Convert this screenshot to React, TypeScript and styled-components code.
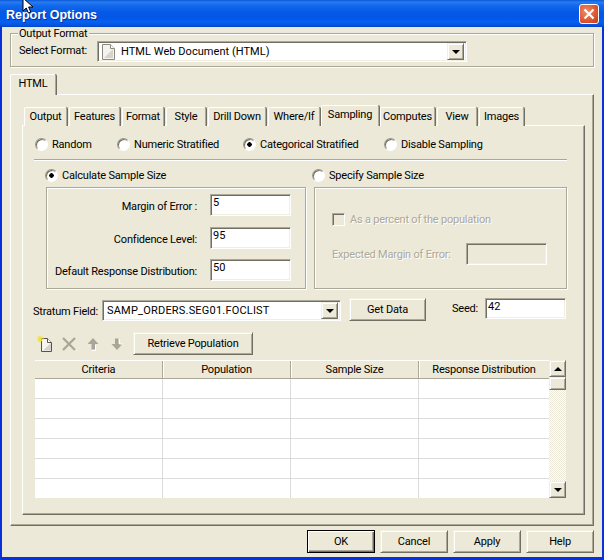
import styled, { createGlobalStyle } from "styled-components";

const GlobalStyle = createGlobalStyle`
  html, body { margin: 0; padding: 0; background: #0a4fd8; }
  * { box-sizing: border-box; }
  body { font-family: Roboto, "Liberation Sans", Arial, sans-serif; font-size: 11px; letter-spacing: -0.2px; color: #000; }
`;

const Window = styled.div`
  position: relative;
  width: 604px;
  height: 560px;
  display: flex;
  flex-direction: column;
  background: #0831d9;
  overflow: hidden;
`;

const TitleBar = styled.div`
  height: 27px;
  flex: none;
  display: flex;
  align-items: center;
  justify-content: space-between;
  padding: 2px 5px 0 6px;
  background: linear-gradient(
    180deg,
    #0a58d8 0%,
    #2a7cf0 8%,
    #1269ec 20%,
    #0659e6 45%,
    #0357e8 65%,
    #0560f0 82%,
    #0452dc 94%,
    #0344c0 100%
  );
`;

const Title = styled.span`
  font-family: "Liberation Sans", Arial, sans-serif;
  font-weight: bold;
  font-size: 12.5px;
  letter-spacing: 0;
  color: #fff;
  text-shadow: 1px 1px 0 #0a2f9a;
`;

const CloseButton = styled.div`
  width: 20px;
  height: 20px;
  margin-top: -2px;
  display: flex;
  align-items: center;
  justify-content: center;
  border: 1px solid #fff;
  border-radius: 3px;
  background: radial-gradient(circle at 35% 35%, #ee8a68 0%, #df5b35 55%, #c23a14 100%);
`;

const Cursor = styled.svg`
  position: absolute;
  left: 22px;
  top: -3px;
`;

const Body = styled.div`
  flex: 1;
  margin: 0 2px 3px;
  padding: 6px 8px 0;
  background: #ece9d8;
  display: flex;
  flex-direction: column;
`;

const GroupBox = styled.div`
  position: relative;
  height: 34px;
  padding: 7px 0 0 8px;
  width: 584px;
  border: 1px solid #aca899;
  box-shadow: inset 1px 1px 0 #fff, 1px 1px 0 #fff;
  display: flex;
  align-items: flex-start;
`;

const GroupCaption = styled.span`
  position: absolute;
  left: 7px;
  top: -7px;
  padding: 0 2px 0 1px;
  background: #ece9d8;
  line-height: 14px;
`;

const SelectLabel = styled.span`
  width: 78px;
  line-height: 20px;
  white-space: nowrap;
`;

const Sunken = styled.div`
  background: #fff;
  border: 1px solid;
  border-color: #aca899 #fff #fff #aca899;
  box-shadow: inset 1px 1px 0 #716f64, inset -1px -1px 0 #f1efe2;
`;

const Combo = styled(Sunken)<{ $width: number; $height: number }>`
  width: ${(p) => p.$width}px;
  height: ${(p) => p.$height}px;
  display: flex;
  align-items: center;
  padding: 2px;
  white-space: nowrap;
`;

const ComboText = styled.span`
  flex: 1;
  padding-left: 2px;
  letter-spacing: 0.2px;
`;

const FormatText = styled(ComboText)`
  padding-left: 6px;
  letter-spacing: 0.05px;
`;

const DocIcon = styled.svg`
  margin-left: 2px;
  flex: none;
`;

const ArrowButton = styled.div<{ $height?: number }>`
  width: 17px;
  height: ${(p) => p.$height ?? 17}px;
  flex: none;
  display: flex;
  align-items: center;
  justify-content: center;
  background: #ece9d8;
  border: 1px solid;
  border-color: #f1efe2 #716f64 #716f64 #f1efe2;
  box-shadow: inset 1px 1px 0 #fff, inset -1px -1px 0 #aca899;
`;

const TriangleDown = styled.span`
  width: 0;
  height: 0;
  border-left: 4px solid transparent;
  border-right: 4px solid transparent;
  border-top: 4px solid #000;
`;

const TriangleUp = styled.span`
  width: 0;
  height: 0;
  border-left: 4px solid transparent;
  border-right: 4px solid transparent;
  border-bottom: 4px solid #000;
`;

const TabStrip = styled.div<{ $pad: number }>`
  display: flex;
  align-items: flex-end;
  gap: 2px;
  padding-left: ${(p) => p.$pad}px;
  margin-bottom: -1px;
  position: relative;
  z-index: 1;
`;

const Tab = styled.div<{ $width: number; $active?: boolean }>`
  width: ${(p) => p.$width}px;
  height: ${(p) => (p.$active ? 21 : 19)}px;
  margin: 0 ${(p) => (p.$active ? -1 : 0)}px;
  display: flex;
  align-items: center;
  justify-content: center;
  padding-bottom: ${(p) => (p.$active ? 3 : 1)}px;
  background: #ece9d8;
  border-top: 1px solid #fff;
  border-left: 1px solid #fff;
  border-right: 1px solid #aca899;
  border-radius: 2px 2px 0 0;
  box-shadow: 1px 0 0 #716f64;
  white-space: nowrap;
`;

const OuterTab = styled(Tab)`
  margin: 7px 0 0;
`;

const OuterPanel = styled.div`
  width: 584px;
  height: 432px;
  padding: 10px 8px 0 11px;
  border: 1px solid;
  border-color: #fff #716f64 #716f64 #fff;
  box-shadow: inset -1px -1px 0 #aca899;
`;

const InnerPanel = styled.div`
  width: 563px;
  height: 390px;
  padding: 11px 17px 0 11px;
  border: 1px solid;
  border-color: #fff #716f64 #716f64 #fff;
  box-shadow: inset -1px -1px 0 #aca899;
`;

const ModeRow = styled.div`
  display: grid;
  grid-template-columns: 82px 126px 141px auto;
  padding-left: 1px;
  height: 14px;
`;

const RadioItem = styled.div`
  display: flex;
  align-items: center;
  gap: 4px;
  height: 14px;
  white-space: nowrap;
  line-height: 13px;
`;

const CalcRadioItem = styled(RadioItem)`
  margin-left: -1px;
`;

const SpecifyRadioItem = styled(RadioItem)`
  margin-left: -2px;
`;

const RadioDot = styled.span<{ $checked?: boolean }>`
  width: 13px;
  height: 13px;
  flex: none;
  border-radius: 50%;
  background: ${(p) =>
    p.$checked
      ? "radial-gradient(circle, #000 0 2px, #fff 2.5px)"
      : "#fff"};
  border: 1px solid;
  border-color: #9a9789 #fff #fff #9a9789;
  box-shadow: inset 1px 1px 0 #716f64;
`;

const Separator = styled.div`
  height: 2px;
  margin-top: 8px;
  border-top: 1px solid #aca899;
  border-bottom: 1px solid #fff;
`;

const Columns = styled.div`
  display: grid;
  grid-template-columns: 260px 253px;
  gap: 8px;
  margin: 7px 0 0 12px;
`;

const Column = styled.div`
  display: flex;
  flex-direction: column;
  gap: 5px;
`;

const EtchedBox = styled.div`
  height: 102px;
  border: 1px solid #aca899;
  box-shadow: inset 1px 1px 0 #fff, 1px 1px 0 #fff;
`;

const SizeBox = styled(EtchedBox)`
  padding-top: 6px;
  display: flex;
  flex-direction: column;
`;

const SizeRow = styled.div`
  display: flex;
  align-items: center;
  gap: 13px;
  & + & {
    margin-top: 10px;
  }
  &:nth-child(2) {
    margin-top: 11px;
  }
`;

const SizeLabel = styled.span`
  width: 150px;
  padding-top: 3px;
  text-align: right;
  white-space: nowrap;
`;

const ValueField = styled(Sunken)<{ $height?: number }>`
  width: 81px;
  height: ${(p) => p.$height ?? 22}px;
  padding: 0 2px;
  line-height: 15px;
  letter-spacing: 0;
`;

const DisabledField = styled(ValueField)`
  background: #ece9d8;
`;

const SpecifyBox = styled(EtchedBox)`
  padding: 25px 0 0 17px;
  color: #aca899;
`;

const CheckRow = styled.div`
  display: flex;
  align-items: center;
  gap: 5px;
  height: 13px;
  text-shadow: 1px 1px 0 #fff;
`;

const CheckSquare = styled.span`
  width: 13px;
  height: 13px;
  border: 1px solid;
  border-color: #aca899 #fff #fff #aca899;
  box-shadow: inset 1px 1px 0 #716f64;
`;

const ExpectedRow = styled.div`
  display: flex;
  align-items: center;
  margin-top: 17px;
  text-shadow: 1px 1px 0 #fff;
`;

const ExpectedLabel = styled.span`
  width: 134px;
  white-space: nowrap;
`;

const StratumRow = styled.div`
  display: flex;
  align-items: flex-start;
  margin: 9px 0 0 -1px;
  height: 23px;
`;

const StratumLabel = styled.span`
  width: 69px;
  margin-top: 6px;
  line-height: 15px;
  white-space: nowrap;
`;

const StratumCombo = styled(Combo)`
  margin: 2px 8px 0 0;
`;

const SeedLabel = styled.span`
  width: 33px;
  margin-left: 26px;
  line-height: 21px;
  white-space: nowrap;
`;

const PushButton = styled.div<{ $width: number }>`
  width: ${(p) => p.$width}px;
  height: 23px;
  display: flex;
  align-items: center;
  justify-content: center;
  flex: none;
  padding-bottom: 1px;
  background: #ece9d8;
  border: 1px solid;
  border-color: #f1efe2 #716f64 #716f64 #f1efe2;
  box-shadow: inset 1px 1px 0 #fff, inset -1px -1px 0 #aca899;
  white-space: nowrap;
`;

const DefaultButton = styled(PushButton)`
  border-color: #000;
  box-shadow: inset 1px 1px 0 #fff, inset -1px -1px 0 #716f64, inset -2px -2px 0 #aca899;
`;

const Toolbar = styled.div`
  display: flex;
  align-items: center;
  gap: 8px;
  margin: 11px 0 0 3px;
  height: 23px;
`;

const TableRow = styled.div`
  display: flex;
  margin: 5px 0 0 1px;
  height: 138px;
`;

const Grid = styled.div`
  width: 514px;
  background: #fff;
  display: flex;
  flex-direction: column;
`;

const HeaderRow = styled.div`
  height: 19px;
  flex: none;
  display: grid;
  grid-template-columns: 128px 128px 128px 130px;
  background: #ece9d8;
  border-top: 1px solid #fff;
  border-bottom: 1px solid #aca899;
`;

const HeaderCell = styled.div`
  display: flex;
  align-items: center;
  justify-content: center;
  white-space: nowrap;
  border-right: 1px solid #aca899;
  box-shadow: 1px 0 0 #fff;
  &:last-child {
    border-right: 0;
    box-shadow: none;
  }
`;

const DataRow = styled.div`
  flex: 1;
  display: grid;
  grid-template-columns: 128px 128px 128px 130px;
  border-bottom: 1px solid #dcdcdc;
  &:last-child {
    border-bottom: 0;
  }
`;

const DataCell = styled.div`
  border-right: 1px solid #dcdcdc;
  &:last-child {
    border-right: 0;
  }
`;

const ScrollBar = styled.div`
  width: 17px;
  display: flex;
  flex-direction: column;
  background: repeating-conic-gradient(#ece9d8 0 25%, #fff 0 50%) 0 0 / 2px 2px;
`;

const ScrollTrack = styled.div`
  flex: 1;
`;

const Footer = styled.div`
  display: flex;
  justify-content: flex-end;
  gap: 5px;
  margin-top: 4px;
`;

const modes = [
  { label: "Random" },
  { label: "Numeric Stratified" },
  { label: "Categorical Stratified", checked: true },
  { label: "Disable Sampling" },
];

const tabs = [
  { label: "Output", width: 43 },
  { label: "Features", width: 51 },
  { label: "Format", width: 42 },
  { label: "Style", width: 40 },
  { label: "Drill Down", width: 58 },
  { label: "Where/If", width: 52 },
  { label: "Sampling", width: 58, active: true },
  { label: "Computes", width: 55 },
  { label: "View", width: 40 },
  { label: "Images", width: 45 },
];

const sizeFields = [
  { label: "Margin of Error :", value: "5" },
  { label: "Confidence Level:", value: "95" },
  { label: "Default Response Distribution:", value: "50" },
];

const columns = ["Criteria", "Population", "Sample Size", "Response Distribution"];
const rows = [0, 1, 2, 3, 4, 5];

function PageIcon() {
  return (
    <DocIcon width="13" height="16" viewBox="0 0 13 16">
      <path d="M.5.5h8l4 4v11H.5z" fill="#f4f3ee" stroke="#8a8a80" />
      <path d="M8.5.5v4h4" fill="#fff" stroke="#8a8a80" />
      <path d="M2 14L11 5v9z" fill="#d6d4cc" />
    </DocIcon>
  );
}

function NewIcon() {
  return (
    <svg width="16" height="18" viewBox="0 0 16 18">
      <path d="M4.5 3.5h6l4 4v9h-10z" fill="#f6f5ef" stroke="#55554d" />
      <path d="M10.5 3.5v4h4" fill="#fff" stroke="#55554d" />
      <path d="M6 15.5L14 8v7.5z" fill="#d4d2ca" />
      <path d="M3 .5v7M0 4h7M.8 1.5l4.6 5M5.4 1.5l-4.6 5" stroke="#f2e22a" strokeWidth="1.1" />
    </svg>
  );
}

function DeleteIcon() {
  return (
    <svg width="16" height="18" viewBox="0 0 16 18">
      <path d="M2 3l12 12M14 3L2 15" stroke="#a8a698" strokeWidth="2.2" />
      <path d="M15 15.5h1" stroke="#fff" />
    </svg>
  );
}

function UpIcon() {
  return (
    <svg width="16" height="18" viewBox="0 0 16 18">
      <path d="M8 3l5.5 6H10v5.5H6.5V9H2.5z" fill="#a8a698" />
      <path d="M10.5 10v5.5H7" stroke="#fff" fill="none" />
    </svg>
  );
}

function DownIcon() {
  return (
    <svg width="16" height="18" viewBox="0 0 16 18">
      <path d="M8 15L2.5 9H6V3.5h3.5V9h4z" fill="#a8a698" />
      <path d="M10.5 4v5H14" stroke="#fff" fill="none" />
    </svg>
  );
}

export default function App() {
  return (
    <>
      <GlobalStyle />
      <Window>
        <TitleBar>
          <Title>Report Options</Title>
          <CloseButton>
            <svg width="12" height="12" viewBox="0 0 12 12">
              <path d="M1.5 1.5l9 9M10.5 1.5l-9 9" stroke="#fff" strokeWidth="2.2" />
            </svg>
          </CloseButton>
        </TitleBar>
        <Cursor width="14" height="18" viewBox="0 0 14 18">
          <path d="M1 1v13l3.2-3 2.2 5 2.4-1-2.2-5H11z" fill="#fff" stroke="#000" />
        </Cursor>
        <Body>
          <GroupBox>
            <GroupCaption>Output Format</GroupCaption>
            <SelectLabel>Select Format:</SelectLabel>
            <Combo $width={370} $height={21}>
              <PageIcon />
              <FormatText>HTML Web Document (HTML)</FormatText>
              <ArrowButton>
                <TriangleDown />
              </ArrowButton>
            </Combo>
          </GroupBox>
          <TabStrip $pad={0}>
            <OuterTab $width={46} $active>
              HTML
            </OuterTab>
          </TabStrip>
          <OuterPanel>
            <TabStrip $pad={2}>
              {tabs.map((t) => (
                <Tab key={t.label} $width={t.width} $active={t.active}>
                  {t.label}
                </Tab>
              ))}
            </TabStrip>
            <InnerPanel>
              <ModeRow>
                {modes.map((m) => (
                  <RadioItem key={m.label}>
                    <RadioDot $checked={m.checked} />
                    {m.label}
                  </RadioItem>
                ))}
              </ModeRow>
              <Separator />
              <Columns>
                <Column>
                  <CalcRadioItem>
                    <RadioDot $checked />
                    Calculate Sample Size
                  </CalcRadioItem>
                  <SizeBox>
                    {sizeFields.map((f) => (
                      <SizeRow key={f.label}>
                        <SizeLabel>{f.label}</SizeLabel>
                        <ValueField>{f.value}</ValueField>
                      </SizeRow>
                    ))}
                  </SizeBox>
                </Column>
                <Column>
                  <SpecifyRadioItem>
                    <RadioDot />
                    Specify Sample Size
                  </SpecifyRadioItem>
                  <SpecifyBox>
                    <CheckRow>
                      <CheckSquare />
                      As a percent of the population
                    </CheckRow>
                    <ExpectedRow>
                      <ExpectedLabel>Expected Margin of Error:</ExpectedLabel>
                      <DisabledField />
                    </ExpectedRow>
                  </SpecifyBox>
                </Column>
              </Columns>
              <StratumRow>
                <StratumLabel>Stratum Field:</StratumLabel>
                <StratumCombo $width={239} $height={21}>
                  <ComboText>SAMP_ORDERS.SEG01.FOCLIST</ComboText>
                  <ArrowButton>
                    <TriangleDown />
                  </ArrowButton>
                </StratumCombo>
                <PushButton $width={77}>Get Data</PushButton>
                <SeedLabel>Seed:</SeedLabel>
                <ValueField $height={21}>42</ValueField>
              </StratumRow>
              <Toolbar>
                <NewIcon />
                <DeleteIcon />
                <UpIcon />
                <DownIcon />
                <PushButton $width={120}>Retrieve Population</PushButton>
              </Toolbar>
              <TableRow>
                <Grid>
                  <HeaderRow>
                    {columns.map((c) => (
                      <HeaderCell key={c}>{c}</HeaderCell>
                    ))}
                  </HeaderRow>
                  {rows.map((r) => (
                    <DataRow key={r}>
                      {columns.map((c) => (
                        <DataCell key={c} />
                      ))}
                    </DataRow>
                  ))}
                </Grid>
                <ScrollBar>
                  <ArrowButton>
                    <TriangleUp />
                  </ArrowButton>
                  <ArrowButton $height={13} />
                  <ScrollTrack />
                  <ArrowButton>
                    <TriangleDown />
                  </ArrowButton>
                </ScrollBar>
              </TableRow>
            </InnerPanel>
          </OuterPanel>
          <Footer>
            <DefaultButton $width={68}>OK</DefaultButton>
            <PushButton $width={68}>Cancel</PushButton>
            <PushButton $width={68}>Apply</PushButton>
            <PushButton $width={68}>Help</PushButton>
          </Footer>
        </Body>
      </Window>
    </>
  );
}
